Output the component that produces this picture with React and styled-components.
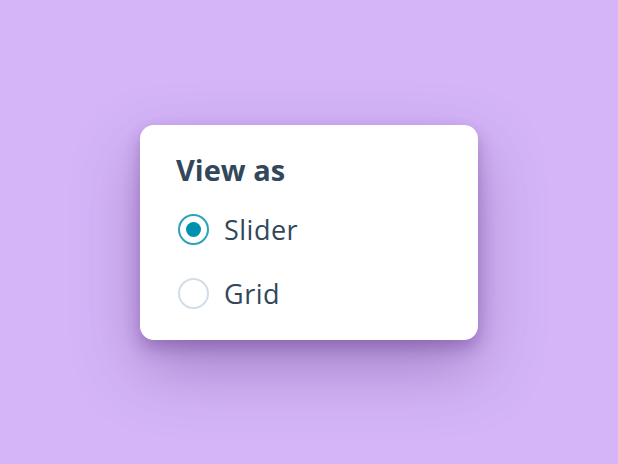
import React, { useState } from 'react';
import styled, { createGlobalStyle } from 'styled-components';

const GlobalStyle = createGlobalStyle`
  html, body {
    margin: 0;
    padding: 0;
    height: 100%;
  }
  body {
    background: #d5b5f8;
    font-family: "Open Sans", "Noto Sans", sans-serif;
  }
  #root {
    height: 100%;
  }
`;

const Page = styled.div`
  height: 100%;
  display: flex;
  align-items: center;
  justify-content: center;
`;

const Card = styled.div`
  width: 338px;
  box-sizing: border-box;
  padding: 28px 36px 30px;
  background: #ffffff;
  border-radius: 14px;
  box-shadow:
    0 8px 16px rgba(70, 30, 110, 0.3),
    0 28px 64px rgba(80, 40, 120, 0.36);
  display: flex;
  flex-direction: column;
`;

const Title = styled.div`
  font-size: 29px;
  line-height: 33px;
  font-weight: 700;
  color: #33475b;
  margin-bottom: 28px;
`;

const Options = styled.div`
  display: flex;
  flex-direction: column;
  gap: 32px;
`;

const Option = styled.label`
  display: flex;
  align-items: center;
  gap: 15px;
  height: 32px;
  cursor: pointer;
`;

const Radio = styled.span`
  width: 31px;
  height: 31px;
  flex: none;
  margin-left: 2px;
  box-sizing: border-box;
  border-radius: 50%;
  border: 2px solid ${({ checked }) => (checked ? '#2aa3b9' : '#d3dde8')};
  background: #ffffff;
  display: flex;
  align-items: center;
  justify-content: center;

  &::after {
    content: '';
    width: 15px;
    height: 15px;
    border-radius: 50%;
    background: #0091ae;
    display: ${({ checked }) => (checked ? 'block' : 'none')};
  }
`;

const Label = styled.span`
  font-size: 27px;
  line-height: 32px;
  letter-spacing: 0.5px;
  color: #33475b;
`;

const options = ['Slider', 'Grid'];

export default function App() {
  const [view, setView] = useState('Slider');

  return (
    <>
      <GlobalStyle />
      <Page>
        <Card>
          <Title>View as</Title>
          <Options>
            {options.map(name => (
              <Option key={name} onClick={() => setView(name)}>
                <Radio checked={view === name} />
                <Label>{name}</Label>
              </Option>
            ))}
          </Options>
        </Card>
      </Page>
    </>
  );
}
